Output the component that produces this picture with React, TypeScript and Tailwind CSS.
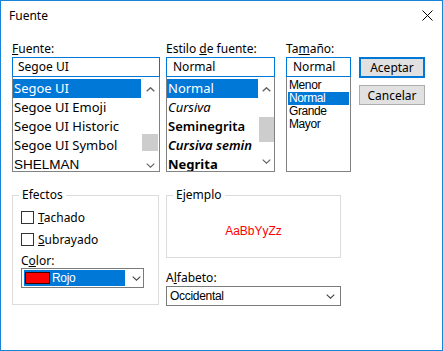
import React from "react";

const ui = "font-['Segoe_UI','Noto_Sans',sans-serif]";
const ms = "font-['Liberation_Sans',Arial,sans-serif]";

const ChevUp = () => (
  <svg width="9" height="5" viewBox="0 0 9 5">
    <polyline points="0.7,4.3 4.5,0.8 8.3,4.3" fill="none" stroke="#606060" strokeWidth="1.4" />
  </svg>
);

const ChevDown = ({ color = "#606060" }: { color?: string }) => (
  <svg width="9" height="5" viewBox="0 0 9 5">
    <polyline points="0.7,0.7 4.5,4.2 8.3,0.7" fill="none" stroke={color} strokeWidth="1.1" />
  </svg>
);

const fonts = ["Segoe UI", "Segoe UI Emoji", "Segoe UI Historic", "Segoe UI Symbol"];

const App = () => {
  return (
    <div className={`w-[443px] h-[351px] bg-white border border-[#1883d7] text-[12px] leading-4 text-black ${ui}`}>
      {/* barra de titulo */}
      <div className="flex items-center justify-between h-[30px] pl-[8px] pr-[9px]">
        <span>Fuente</span>
        <svg width="11" height="11" viewBox="0 0 11 11" className="mb-[1px]">
          <path d="M0.5 0.5 L10.5 10.5 M10.5 0.5 L0.5 10.5" stroke="#000" strokeWidth="1" />
        </svg>
      </div>

      <div className="px-[11px]">
        {/* fila superior */}
        <div className="flex mt-[10px]">
          {/* fuente */}
          <div className="w-[148px]">
            <div className="h-4"><span className="underline">F</span>uente:</div>
            <div className="h-[20px] border border-[#0078d7] pl-[5px] leading-[18px]">Segoe UI</div>
            <div className="flex h-[95px] border border-t-0 border-[#828282] overflow-hidden">
              <div className="w-[128px] pt-[2px] text-[13px]">
                {fonts.map((f, i) => (
                  <div
                    key={f}
                    className={`h-[19px] leading-[19px] pl-[1px] whitespace-nowrap ${i === 0 ? "bg-[#0078d7] text-white" : ""}`}
                  >
                    {f}
                  </div>
                ))}
                <div className={`h-[19px] leading-[19px] pl-[1px] text-[13.5px] ${ms}`}>SHELMAN</div>
              </div>
              <div className="flex flex-col items-center w-[18px] pt-[10px]">
                <ChevUp />
                <div className="mt-[42px] w-[16px] h-[17px] bg-[#cdcdcd]" />
                <div className="mt-[12px]"><ChevDown /></div>
              </div>
            </div>
          </div>

          {/* estilo */}
          <div className="w-[109px] ml-[6px]">
            <div className="h-4">Estilo <span className="underline">d</span>e fuente:</div>
            <div className="h-[20px] border border-[#0078d7] pl-[6px] leading-[18px]">Normal</div>
            <div className="flex h-[95px] border border-t-0 border-[#828282] overflow-hidden">
              <div className="w-[91px] pt-[2px] text-[13px] overflow-hidden whitespace-nowrap">
                <div className="h-[19px] leading-[19px] pl-[1px] bg-[#0078d7] text-white">Normal</div>
                <div className="h-[19px] leading-[19px] pl-[1px] italic">Cursiva</div>
                <div className="h-[19px] leading-[19px] pl-[1px] font-semibold">Seminegrita</div>
                <div className="h-[19px] leading-[19px] pl-[1px] italic font-semibold">Cursiva semin</div>
                <div className="h-[19px] leading-[19px] pl-[1px] font-bold">Negrita</div>
              </div>
              <div className="flex flex-col items-end w-[16px] pt-[10px]">
                <div className="self-center"><ChevUp /></div>
                <div className="mt-[25px] w-[15px] h-[25px] bg-[#cdcdcd]" />
                <div className="self-center mt-[17px]"><ChevDown /></div>
              </div>
            </div>
          </div>

          {/* tamaño */}
          <div className="w-[65px] ml-[11px]">
            <div className="h-4">Ta<span className="underline">m</span>año:</div>
            <div className="h-[20px] border border-[#0078d7] pl-[6px] leading-[18px]">Normal</div>
            <div className={`h-[95px] border border-t-0 border-[#828282] px-[1px] pt-[2px] text-[12px] tracking-[-0.4px] ${ms}`}>
              <div className="h-[13px] leading-[13px] pl-px">Menor</div>
              <div className="h-[13px] leading-[13px] pl-px bg-[#0078d7] text-white">Normal</div>
              <div className="h-[13px] leading-[13px] pl-px">Grande</div>
              <div className="h-[13px] leading-[13px] pl-px">Mayor</div>
            </div>
          </div>

          {/* botones */}
          <div className="w-[66px] ml-[8px] pt-4 flex flex-col">
            <button className="h-[21px] border-2 border-[#0078d7] bg-[#e1e1e1] leading-[16px]">Aceptar</button>
            <button className="mt-[7px] h-[20px] border border-[#adadad] bg-[#e1e1e1] leading-[17px]">Cancelar</button>
          </div>
        </div>

        {/* fila inferior */}
        <div className="flex mt-[15px]">
          <fieldset className="w-[147px] h-[118px] border border-[#dcdcdc]">
            <legend className="ml-[6px] px-[3px] leading-4">Efectos</legend>
            <div className="pl-[8px]">
              <label className="mt-[8px] flex items-center h-[13px] gap-[4px]">
                <span className="w-[13px] h-[13px] border border-[#333]" />
                <span><span className="underline">T</span>achado</span>
              </label>
              <label className="mt-[9px] flex items-center h-[13px] gap-[4px]">
                <span className="w-[13px] h-[13px] border border-[#333]" />
                <span><span className="underline">S</span>ubrayado</span>
              </label>
              <div className="mt-[7px] leading-[15px]">C<span className="underline">o</span>lor:</div>
              <div className="flex items-center w-[123px] h-[20px] border border-[#7a7a7a] pl-[2px]">
                <div className={`flex items-center w-[101px] h-[16px] bg-[#0078d7] pl-px text-white text-[12px] tracking-[-0.3px] ${ms}`}>
                  <span className="w-[25px] h-[12px] bg-[#ff0000] border border-[#400]" />
                  <span className="ml-[2px]">Rojo</span>
                </div>
                <div className="ml-[7px]"><ChevDown color="#444" /></div>
              </div>
            </div>
          </fieldset>

          <div className="w-[175px] ml-[7px]">
            <fieldset className="h-[71px] border border-[#dcdcdc]">
              <legend className="ml-[6px] px-[3px] leading-4">Ejemplo</legend>
              <div className={`flex items-center justify-center h-[54px] pt-[2px] text-[#ff0000] text-[12px] ${ms}`}>
                AaBbYyZz
              </div>
            </fieldset>
            <div className="mt-[12px] h-4">A<span className="underline">l</span>fabeto:</div>
            <div className={`flex items-center justify-between h-[20px] border border-[#7a7a7a] pl-[3px] pr-[5px] text-[12px] tracking-[-0.3px] ${ms}`}>
              <span>Occidental</span>
              <ChevDown color="#444" />
            </div>
          </div>
        </div>
      </div>
    </div>
  );
};

export default App;
